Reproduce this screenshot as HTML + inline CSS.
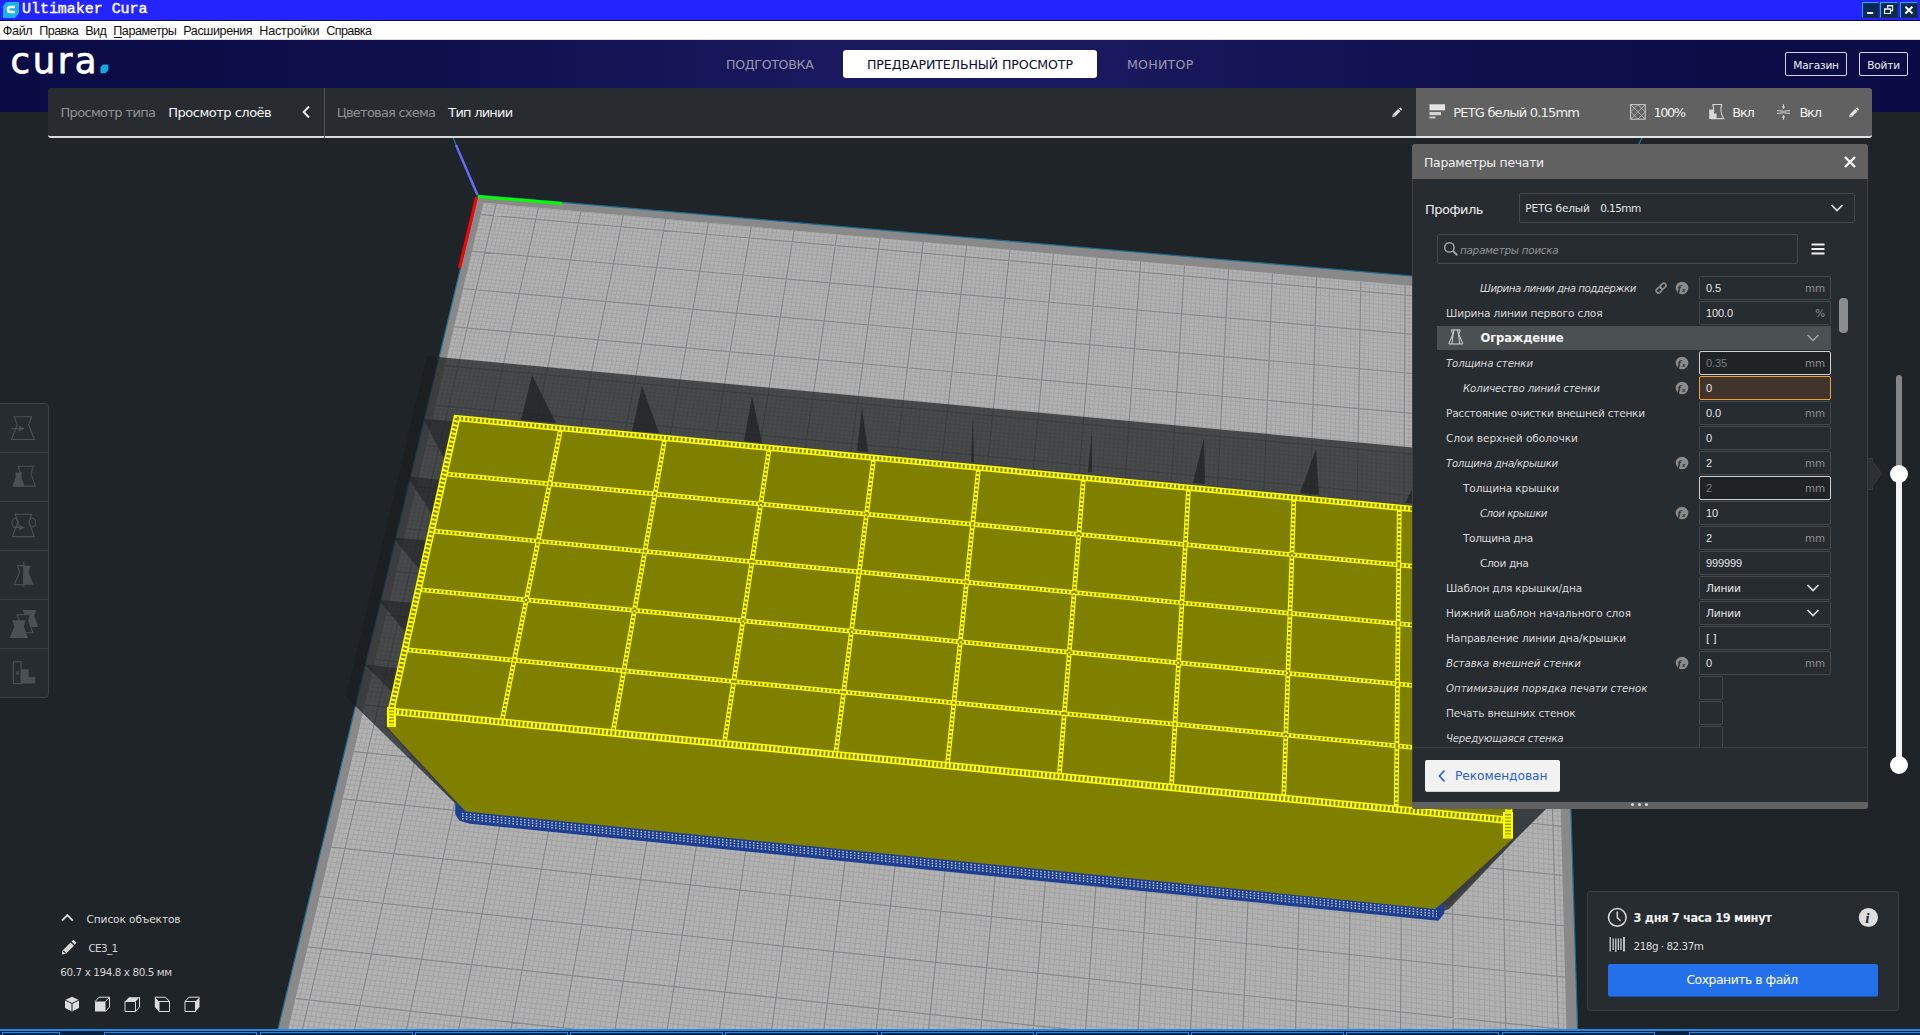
<!DOCTYPE html>
<html lang="ru">
<head>
<meta charset="utf-8">
<title>Ultimaker Cura</title>
<style>
*{box-sizing:border-box;margin:0;padding:0}
html,body{width:1920px;height:1035px;overflow:hidden;background:#1f2428}
body{position:relative;font-family:"Liberation Sans","DejaVu Sans",sans-serif;color:#e6e6e6;font-size:14px}
.abs{position:absolute;display:block}
.t{position:absolute;white-space:nowrap;line-height:1}
svg{overflow:visible}
</style>
</head>
<body>
<svg id="scene" class="abs" style="left:0;top:0" width="1920" height="1035" viewBox="0 0 1920 1035">
<polygon points="478.0,195.0 1554.9,288.4 1583.6,1223.2 266.8,1075.7" fill="#898989" stroke="#1d6c90" stroke-width="1.2"/>
<clipPath id="cpin"><polygon points="483.5,202.7 1547.2,298.0 1571.5,1221.9 277.0,1076.9"/></clipPath>
<polygon points="483.5,202.7 1547.2,298.0 1571.5,1221.9 277.0,1076.9" fill="#b2b2b2"/>
<path d="M485.3 195.6L275.7 1076.7M489.5 196.0L280.8 1077.3M493.7 196.4L285.9 1077.9M502.2 197.1L296.1 1079.0M506.4 197.5L301.2 1079.6M510.6 197.8L306.4 1080.2M514.8 198.2L311.5 1080.7M519.0 198.6L316.6 1081.3M523.2 198.9L321.7 1081.9M527.5 199.3L326.9 1082.5M531.7 199.7L332.0 1083.0M535.9 200.0L337.1 1083.6M544.4 200.8L347.4 1084.8M548.6 201.1L352.5 1085.3M552.8 201.5L357.7 1085.9M557.0 201.9L362.8 1086.5M561.3 202.2L368.0 1087.1M565.5 202.6L373.1 1087.6M569.7 203.0L378.2 1088.2M574.0 203.3L383.4 1088.8M578.2 203.7L388.5 1089.4M586.7 204.4L398.8 1090.5M590.9 204.8L404.0 1091.1M595.1 205.2L409.1 1091.7M599.4 205.5L414.3 1092.3M603.6 205.9L419.4 1092.8M607.8 206.3L424.6 1093.4M612.1 206.6L429.8 1094.0M616.3 207.0L434.9 1094.6M620.6 207.4L440.1 1095.1M629.0 208.1L450.4 1096.3M633.3 208.5L455.6 1096.9M637.5 208.8L460.7 1097.5M641.8 209.2L465.9 1098.0M646.0 209.6L471.1 1098.6M650.3 209.9L476.3 1099.2M654.5 210.3L481.4 1099.8M658.8 210.7L486.6 1100.4M663.0 211.0L491.8 1100.9M671.5 211.8L502.1 1102.1M675.8 212.2L507.3 1102.7M680.1 212.5L512.5 1103.3M684.3 212.9L517.7 1103.8M688.6 213.3L522.9 1104.4M692.8 213.6L528.1 1105.0M697.1 214.0L533.2 1105.6M701.3 214.4L538.4 1106.2M705.6 214.7L543.6 1106.7M714.1 215.5L554.0 1107.9M718.4 215.9L559.2 1108.5M722.7 216.2L564.4 1109.1M726.9 216.6L569.6 1109.6M731.2 217.0L574.8 1110.2M735.5 217.3L580.0 1110.8M739.7 217.7L585.2 1111.4M744.0 218.1L590.4 1112.0M748.3 218.4L595.6 1112.6M756.8 219.2L606.0 1113.7M761.1 219.6L611.2 1114.3M765.4 219.9L616.5 1114.9M769.7 220.3L621.7 1115.5M773.9 220.7L626.9 1116.1M778.2 221.0L632.1 1116.6M782.5 221.4L637.3 1117.2M786.8 221.8L642.5 1117.8M791.1 222.2L647.8 1118.4M799.6 222.9L658.2 1119.6M803.9 223.3L663.4 1120.2M808.2 223.6L668.7 1120.7M812.5 224.0L673.9 1121.3M816.8 224.4L679.1 1121.9M821.1 224.8L684.4 1122.5M825.4 225.1L689.6 1123.1M829.7 225.5L694.8 1123.7M833.9 225.9L700.1 1124.3M842.5 226.6L710.5 1125.4M846.8 227.0L715.8 1126.0M851.1 227.4L721.0 1126.6M855.4 227.7L726.3 1127.2M859.7 228.1L731.5 1127.8M864.0 228.5L736.8 1128.4M868.3 228.9L742.0 1129.0M872.6 229.2L747.3 1129.5M876.9 229.6L752.5 1130.1M885.5 230.3L763.0 1131.3M889.8 230.7L768.3 1131.9M894.1 231.1L773.5 1132.5M898.5 231.5L778.8 1133.1M902.8 231.8L784.1 1133.7M907.1 232.2L789.3 1134.3M911.4 232.6L794.6 1134.8M915.7 233.0L799.8 1135.4M920.0 233.3L805.1 1136.0M928.6 234.1L815.7 1137.2M933.0 234.5L820.9 1137.8M937.3 234.8L826.2 1138.4M941.6 235.2L831.5 1139.0M945.9 235.6L836.8 1139.6M950.2 236.0L842.0 1140.2M954.5 236.3L847.3 1140.7M958.9 236.7L852.6 1141.3M963.2 237.1L857.9 1141.9M971.8 237.8L868.4 1143.1M976.2 238.2L873.7 1143.7M980.5 238.6L879.0 1144.3M984.8 239.0L884.3 1144.9M989.2 239.3L889.6 1145.5M993.5 239.7L894.9 1146.1M997.8 240.1L900.2 1146.7M1002.1 240.5L905.5 1147.3M1006.5 240.8L910.8 1147.9M1015.2 241.6L921.4 1149.0M1019.5 242.0L926.7 1149.6M1023.8 242.3L932.0 1150.2M1028.2 242.7L937.3 1150.8M1032.5 243.1L942.6 1151.4M1036.8 243.5L947.9 1152.0M1041.2 243.8L953.2 1152.6M1045.5 244.2L958.5 1153.2M1049.9 244.6L963.9 1153.8M1058.6 245.4L974.5 1155.0M1062.9 245.7L979.8 1155.6M1067.3 246.1L985.1 1156.2M1071.6 246.5L990.4 1156.8M1076.0 246.9L995.8 1157.4M1080.3 247.2L1001.1 1158.0M1084.7 247.6L1006.4 1158.6M1089.0 248.0L1011.7 1159.2M1093.4 248.4L1017.1 1159.8M1102.1 249.1L1027.7 1161.0M1106.4 249.5L1033.1 1161.6M1110.8 249.9L1038.4 1162.2M1115.2 250.3L1043.7 1162.7M1119.5 250.6L1049.1 1163.3M1123.9 251.0L1054.4 1163.9M1128.2 251.4L1059.8 1164.5M1132.6 251.8L1065.1 1165.1M1137.0 252.2L1070.5 1165.7M1145.7 252.9L1081.1 1166.9M1150.1 253.3L1086.5 1167.5M1154.4 253.7L1091.8 1168.1M1158.8 254.0L1097.2 1168.7M1163.2 254.4L1102.6 1169.3M1167.6 254.8L1107.9 1169.9M1171.9 255.2L1113.3 1170.5M1176.3 255.6L1118.6 1171.1M1180.7 255.9L1124.0 1171.7M1189.4 256.7L1134.7 1172.9M1193.8 257.1L1140.1 1173.5M1198.2 257.5L1145.4 1174.1M1202.6 257.8L1150.8 1174.7M1207.0 258.2L1156.2 1175.3M1211.3 258.6L1161.6 1175.9M1215.7 259.0L1166.9 1176.5M1220.1 259.4L1172.3 1177.1M1224.5 259.7L1177.7 1177.7M1233.3 260.5L1188.4 1179.0M1237.7 260.9L1193.8 1179.6M1242.0 261.3L1199.2 1180.2M1246.4 261.6L1204.6 1180.8M1250.8 262.0L1210.0 1181.4M1255.2 262.4L1215.4 1182.0M1259.6 262.8L1220.7 1182.6M1264.0 263.2L1226.1 1183.2M1268.4 263.6L1231.5 1183.8M1277.2 264.3L1242.3 1185.0M1281.6 264.7L1247.7 1185.6M1286.0 265.1L1253.1 1186.2M1290.4 265.5L1258.5 1186.8M1294.8 265.8L1263.9 1187.4M1299.2 266.2L1269.3 1188.0M1303.6 266.6L1274.7 1188.6M1308.0 267.0L1280.1 1189.2M1312.4 267.4L1285.5 1189.8M1321.2 268.1L1296.4 1191.0M1325.7 268.5L1301.8 1191.6M1330.1 268.9L1307.2 1192.3M1334.5 269.3L1312.6 1192.9M1338.9 269.7L1318.0 1193.5M1343.3 270.0L1323.4 1194.1M1347.7 270.4L1328.9 1194.7M1352.1 270.8L1334.3 1195.3M1356.6 271.2L1339.7 1195.9M1365.4 272.0L1350.6 1197.1M1369.8 272.3L1356.0 1197.7M1374.2 272.7L1361.4 1198.3M1378.7 273.1L1366.9 1198.9M1383.1 273.5L1372.3 1199.5M1387.5 273.9L1377.7 1200.2M1391.9 274.3L1383.2 1200.8M1396.4 274.6L1388.6 1201.4M1400.8 275.0L1394.0 1202.0M1409.6 275.8L1404.9 1203.2M1414.1 276.2L1410.4 1203.8M1418.5 276.6L1415.8 1204.4M1422.9 277.0L1421.3 1205.0M1427.4 277.3L1426.7 1205.6M1431.8 277.7L1432.2 1206.3M1436.2 278.1L1437.6 1206.9M1440.7 278.5L1443.1 1207.5M1445.1 278.9L1448.5 1208.1M1454.0 279.6L1459.5 1209.3M1458.4 280.0L1464.9 1209.9M1462.9 280.4L1470.4 1210.5M1467.3 280.8L1475.8 1211.1M1471.8 281.2L1481.3 1211.8M1476.2 281.6L1486.8 1212.4M1480.7 282.0L1492.2 1213.0M1485.1 282.3L1497.7 1213.6M1489.6 282.7L1503.2 1214.2M1498.5 283.5L1514.1 1215.4M1502.9 283.9L1519.6 1216.0M1507.4 284.3L1525.1 1216.7M1511.8 284.7L1530.6 1217.3M1516.3 285.1L1536.1 1217.9M1520.8 285.4L1541.5 1218.5M1525.2 285.8L1547.0 1219.1M1529.7 286.2L1552.5 1219.7M1534.1 286.6L1558.0 1220.3M1543.1 287.4L1569.0 1221.6M1547.5 287.8L1574.5 1222.2M477.0 199.4L1555.1 293.0M476.1 203.0L1555.2 296.8M475.2 206.6L1555.3 300.6M474.4 210.2L1555.4 304.4M472.6 217.5L1555.7 312.1M471.7 221.1L1555.8 316.0M470.9 224.8L1555.9 319.8M470.0 228.5L1556.0 323.7M469.1 232.1L1556.1 327.6M468.2 235.8L1556.3 331.4M467.3 239.5L1556.4 335.3M466.4 243.2L1556.5 339.2M465.6 246.9L1556.6 343.1M463.8 254.3L1556.9 350.9M462.9 258.0L1557.0 354.9M462.0 261.7L1557.1 358.8M461.1 265.4L1557.2 362.7M460.2 269.2L1557.3 366.7M459.3 272.9L1557.5 370.6M458.4 276.7L1557.6 374.6M457.5 280.4L1557.7 378.5M456.6 284.2L1557.8 382.5M454.8 291.8L1558.1 390.5M453.9 295.5L1558.2 394.5M453.0 299.3L1558.3 398.5M452.1 303.1L1558.4 402.5M451.2 306.9L1558.6 406.5M450.2 310.8L1558.7 410.5M449.3 314.6L1558.8 414.6M448.4 318.4L1558.9 418.6M447.5 322.2L1559.1 422.7M445.6 329.9L1559.3 430.8M444.7 333.8L1559.4 434.9M443.8 337.6L1559.6 439.0M442.9 341.5L1559.7 443.1M441.9 345.4L1559.8 447.2M441.0 349.3L1559.9 451.3M440.1 353.2L1560.1 455.4M439.1 357.1L1560.2 459.5M438.2 361.0L1560.3 463.6M436.3 368.8L1560.6 471.9M435.4 372.8L1560.7 476.1M434.4 376.7L1560.8 480.2M433.5 380.6L1561.0 484.4M432.5 384.6L1561.1 488.6M431.6 388.6L1561.2 492.8M430.6 392.5L1561.3 497.0M429.7 396.5L1561.5 501.2M428.7 400.5L1561.6 505.4M426.8 408.5L1561.9 513.8M425.8 412.5L1562.0 518.1M424.9 416.5L1562.1 522.3M423.9 420.5L1562.3 526.6M423.0 424.5L1562.4 530.8M422.0 428.6L1562.5 535.1M421.0 432.6L1562.6 539.4M420.0 436.7L1562.8 543.7M419.1 440.7L1562.9 548.0M417.1 448.9L1563.2 556.6M416.1 453.0L1563.3 560.9M415.2 457.1L1563.4 565.2M414.2 461.2L1563.6 569.6M413.2 465.3L1563.7 573.9M412.2 469.4L1563.8 578.3M411.2 473.5L1564.0 582.6M410.2 477.6L1564.1 587.0M409.2 481.8L1564.2 591.4M407.2 490.1L1564.5 600.2M406.2 494.2L1564.6 604.6M405.2 498.4L1564.8 609.0M404.2 502.6L1564.9 613.5M403.2 506.8L1565.1 617.9M402.2 511.0L1565.2 622.3M401.2 515.2L1565.3 626.8M400.2 519.4L1565.5 631.3M399.2 523.6L1565.6 635.7M397.2 532.1L1565.9 644.7M396.1 536.3L1566.0 649.2M395.1 540.6L1566.2 653.7M394.1 544.8L1566.3 658.2M393.1 549.1L1566.4 662.8M392.0 553.4L1566.6 667.3M391.0 557.7L1566.7 671.8M390.0 562.0L1566.8 676.4M389.0 566.3L1567.0 681.0M386.9 574.9L1567.3 690.1M385.8 579.3L1567.4 694.7M384.8 583.6L1567.6 699.3M383.8 587.9L1567.7 703.9M382.7 592.3L1567.8 708.5M381.7 596.7L1568.0 713.2M380.6 601.0L1568.1 717.8M379.6 605.4L1568.3 722.5M378.5 609.8L1568.4 727.1M376.4 618.6L1568.7 736.5M375.3 623.0L1568.8 741.2M374.3 627.5L1569.0 745.9M373.2 631.9L1569.1 750.6M372.2 636.4L1569.3 755.3M371.1 640.8L1569.4 760.0M370.0 645.3L1569.6 764.8M368.9 649.7L1569.7 769.5M367.9 654.2L1569.9 774.3M365.7 663.2L1570.1 783.8M364.6 667.7L1570.3 788.6M363.5 672.2L1570.4 793.4M362.5 676.8L1570.6 798.2M361.4 681.3L1570.7 803.0M360.3 685.9L1570.9 807.9M359.2 690.4L1571.0 812.7M358.1 695.0L1571.2 817.5M357.0 699.5L1571.3 822.4M354.8 708.7L1571.6 832.1M353.7 713.3L1571.8 837.0M352.6 717.9L1571.9 841.9M351.5 722.6L1572.1 846.8M350.4 727.2L1572.2 851.8M349.3 731.8L1572.4 856.7M348.1 736.5L1572.5 861.6M347.0 741.1L1572.7 866.6M345.9 745.8L1572.8 871.6M343.7 755.2L1573.1 881.5M342.5 759.9L1573.3 886.5M341.4 764.6L1573.4 891.5M340.3 769.3L1573.6 896.5M339.1 774.0L1573.8 901.6M338.0 778.8L1573.9 906.6M336.9 783.5L1574.1 911.7M335.7 788.3L1574.2 916.7M334.6 793.0L1574.4 921.8M332.3 802.6L1574.7 932.0M331.1 807.4L1574.8 937.1M330.0 812.2L1575.0 942.2M328.8 817.0L1575.2 947.3M327.7 821.8L1575.3 952.4M326.5 826.7L1575.5 957.6M325.3 831.5L1575.6 962.8M324.2 836.4L1575.8 967.9M323.0 841.2L1576.0 973.1M320.7 851.0L1576.3 983.5M319.5 855.9L1576.4 988.7M318.3 860.8L1576.6 994.0M317.1 865.7L1576.8 999.2M316.0 870.7L1576.9 1004.4M314.8 875.6L1577.1 1009.7M313.6 880.6L1577.2 1015.0M312.4 885.5L1577.4 1020.3M311.2 890.5L1577.6 1025.6M308.8 900.5L1577.9 1036.2M307.6 905.5L1578.1 1041.5M306.4 910.5L1578.2 1046.9M305.2 915.5L1578.4 1052.2M304.0 920.6L1578.5 1057.6M302.8 925.6L1578.7 1063.0M301.6 930.7L1578.9 1068.4M300.4 935.7L1579.0 1073.8M299.1 940.8L1579.2 1079.2M296.7 951.0L1579.5 1090.1M295.5 956.1L1579.7 1095.5M294.2 961.2L1579.9 1101.0M293.0 966.4L1580.0 1106.5M291.8 971.5L1580.2 1111.9M290.5 976.7L1580.4 1117.4M289.3 981.8L1580.6 1123.0M288.0 987.0L1580.7 1128.5M286.8 992.2L1580.9 1134.0M284.3 1002.6L1581.2 1145.1M283.1 1007.9L1581.4 1150.7M281.8 1013.1L1581.6 1156.3M280.5 1018.3L1581.7 1161.9M279.3 1023.6L1581.9 1167.5M278.0 1028.9L1582.1 1173.2M276.7 1034.2L1582.3 1178.8M275.5 1039.5L1582.4 1184.5M274.2 1044.8L1582.6 1190.1M271.7 1055.4L1583.0 1201.5M270.4 1060.7L1583.1 1207.2M269.1 1066.1L1583.3 1212.9M267.8 1071.5L1583.5 1218.7" stroke="#a0a0a0" stroke-width="0.9" fill="none" clip-path="url(#cpin)"/>
<path d="M497.9 196.7L291.0 1078.4M540.1 200.4L342.3 1084.2M582.4 204.1L393.7 1089.9M624.8 207.7L445.2 1095.7M667.3 211.4L497.0 1101.5M709.9 215.1L548.8 1107.3M752.6 218.8L600.8 1113.1M795.3 222.5L653.0 1119.0M838.2 226.2L705.3 1124.8M881.2 230.0L757.8 1130.7M924.3 233.7L810.4 1136.6M967.5 237.5L863.2 1142.5M1010.8 241.2L916.1 1148.5M1054.2 245.0L969.2 1154.4M1097.7 248.7L1022.4 1160.4M1141.3 252.5L1075.8 1166.3M1185.1 256.3L1129.3 1172.3M1228.9 260.1L1183.1 1178.4M1272.8 263.9L1236.9 1184.4M1316.8 267.8L1291.0 1190.4M1361.0 271.6L1345.1 1196.5M1405.2 275.4L1399.5 1202.6M1449.6 279.3L1454.0 1208.7M1494.0 283.1L1508.7 1214.8M1538.6 287.0L1563.5 1221.0M473.5 213.9L1555.6 308.3M464.7 250.6L1556.7 347.0M455.7 288.0L1558.0 386.5M446.6 326.1L1559.2 426.7M437.3 364.9L1560.4 467.8M427.8 404.5L1561.7 509.6M418.1 444.8L1563.0 552.3M408.2 485.9L1564.4 595.8M398.2 527.8L1565.7 640.2M387.9 570.6L1567.1 685.5M377.5 614.2L1568.5 731.8M366.8 658.7L1570.0 779.0M355.9 704.1L1571.5 827.3M344.8 750.5L1573.0 876.5M333.4 797.8L1574.5 926.9M321.8 846.1L1576.1 978.3M310.0 895.5L1577.7 1030.9M297.9 945.9L1579.4 1084.6M285.6 997.4L1581.1 1139.6M272.9 1050.1L1582.8 1195.8" stroke="#85888c" stroke-width="1.2" fill="none" clip-path="url(#cpin)"/>
<polygon points="427.0,356.0 1570.0,462.0 1553.0,800.0 1449.0,909.0 1441.0,912.0 458.0,806.0 346.0,697.0" fill="#1b1d1f" fill-opacity="0.71"/>
<polygon points="532.0,375.0 521.0,420.0 556.0,423.0" fill="#202224" fill-opacity="0.75"/>
<polygon points="642.0,386.0 632.0,431.0 659.0,433.0" fill="#202224" fill-opacity="0.75"/>
<polygon points="752.0,396.0 744.0,441.0 762.0,443.0" fill="#202224" fill-opacity="0.75"/>
<polygon points="862.0,407.0 857.0,451.0 868.0,452.0" fill="#202224" fill-opacity="0.75"/>
<polygon points="973.0,417.0 971.0,462.0 974.0,462.5" fill="#202224" fill-opacity="0.75"/>
<polygon points="1092.0,430.0 1088.0,472.0 1092.0,472.6" fill="#202224" fill-opacity="0.75"/>
<polygon points="1204.0,438.0 1193.0,483.0 1205.0,484.0" fill="#202224" fill-opacity="0.75"/>
<polygon points="1316.0,449.0 1300.0,493.0 1319.0,495.0" fill="#202224" fill-opacity="0.75"/>
<polygon points="1428.0,460.0 1405.0,503.0 1431.0,505.0" fill="#202224" fill-opacity="0.75"/>
<polygon points="423.4,418.7 453.8,421.2 444.9,460.5" fill="#202224" fill-opacity="0.6"/>
<polygon points="407.3,476.6 444.9,480.2 434.1,517.7" fill="#202224" fill-opacity="0.6"/>
<polygon points="393.0,537.4 432.3,540.9 425.2,576.7" fill="#202224" fill-opacity="0.6"/>
<polygon points="378.7,599.9 421.6,603.5 412.7,641.0" fill="#202224" fill-opacity="0.6"/>
<polygon points="364.4,664.3 407.3,669.6 400.2,700.0" fill="#202224" fill-opacity="0.6"/>
<polygon points="1514.0,806.0 1549.0,806.0 1447.5,906.5 1443.5,902.5 1512.0,839.0" fill="#3b3e41"/>
<path d="M386 726L458 804" stroke="#3b3e41" stroke-width="3" fill="none"/>
<polygon points="456.0,803.0 466.0,811.5 1435.0,908.8 1443.5,901.0 1443.5,913.0 1438.0,920.0 470.0,823.0 460.0,820.0 456.0,814.0" fill="#1f3f92" stroke="#1f3f92" stroke-width="1.5" stroke-linejoin="round"/>
<path d="M462.0 813.5L1437.0 911.2M462.0 816.1L1437.0 913.8M462.0 818.7L1437.0 916.4" stroke="#b9c0cc" stroke-width="1.5" stroke-dasharray="1.5 2.4" fill="none"/>
<polygon points="387.0,712.0 1512.5,822.0 1512.5,839.0 1443.5,902.0 1435.0,909.0 466.0,811.5 458.0,803.5 387.0,727.0" fill="#808000"/>
<polygon points="456.8,418.2 1505.0,517.7 1509.0,820.3 391.0,711.3" fill="#808000"/>
<path d="M560.8 428.1L501.8 722.1M664.9 438.0L612.9 732.9M769.3 447.9L724.2 743.8M873.8 457.8L835.6 754.7M978.6 467.7L947.3 765.5M1083.5 477.7L1059.2 776.4M1188.6 487.7L1171.4 787.4M1293.9 497.7L1283.7 798.3M1399.3 507.7L1396.2 809.3M444.3 473.9L1505.8 575.1M431.5 530.9L1506.5 634.0M418.3 589.5L1507.3 694.5M404.9 649.6L1508.2 756.6" stroke="#ffff00" stroke-width="4.7" fill="none"/>
<path d="M560.8 428.1L501.8 722.1M664.9 438.0L612.9 732.9M769.3 447.9L724.2 743.8M873.8 457.8L835.6 754.7M978.6 467.7L947.3 765.5M1083.5 477.7L1059.2 776.4M1188.6 487.7L1171.4 787.4M1293.9 497.7L1283.7 798.3M1399.3 507.7L1396.2 809.3M444.3 473.9L1505.8 575.1M431.5 530.9L1506.5 634.0M418.3 589.5L1507.3 694.5M404.9 649.6L1508.2 756.6" stroke="#848400" stroke-width="2.6" stroke-dasharray="2.2 2" fill="none"/>
<path d="M454.0 414.8L1508.5 514.9L1512.6 824.4L386.7 714.6Z M459.6 421.6L1501.5 520.5L1505.4 816.2L395.3 708.0Z" fill="#ffff00" fill-rule="evenodd"/>
<path d="M456.8 418.2L1505.0 517.7" stroke="#848400" stroke-width="3.4" stroke-dasharray="2.2 2" fill="none"/>
<path d="M1505.0 517.7L1509.0 820.3" stroke="#848400" stroke-width="4.2" stroke-dasharray="2.2 2" fill="none"/>
<path d="M1509.0 820.3L391.0 711.3" stroke="#848400" stroke-width="4.6" stroke-dasharray="2.2 2" fill="none"/>
<path d="M391.0 711.3L456.8 418.2" stroke="#848400" stroke-width="4.2" stroke-dasharray="2.2 2" fill="none"/>
<rect x="387" y="707" width="9" height="20" fill="#ffff00"/>
<path d="M391.5 709V725.5" stroke="#9a9a00" stroke-width="5" stroke-dasharray="1.4 1.8" fill="none"/>
<rect x="1503" y="812" width="10" height="26.5" fill="#ffff00"/>
<path d="M1508.0 814V837.0" stroke="#9a9a00" stroke-width="6" stroke-dasharray="1.4 1.8" fill="none"/>
<path d="M1645.5 131L1638.3 145M452 135L456.5 146" stroke="#1d7ca8" stroke-width="1.2" fill="none"/>
<path d="M456 145L477.5 195" stroke="#6a6aff" stroke-width="2.4" fill="none"/>
<path d="M478 196.5L562 203.5" stroke="#00ff00" stroke-width="3" fill="none"/>
<path d="M476.5 197L459.5 268" stroke="#ff0000" stroke-width="3" fill="none"/>
</svg>
<div class="abs" style="left:0px;top:0px;width:1920px;height:20px;background:#2424ff"></div>
<div class="abs" style="left:0px;top:20px;width:1920px;height:1px;background:#101040"></div>
<svg class="abs" style="left:2px;top:1px" width="18" height="18" viewBox="0 0 18 18"><path d="M4 1H17V12L13 17H1V5Z" fill="#18b4e6"/><path d="M13 6H8.2Q6 6 6 8.2V8.8Q6 11 8.2 11H13" fill="none" stroke="#fff" stroke-width="2.6"/></svg>
<span class="t" style="top:2.15px;font-size:15px;color:#ffffff;letter-spacing:-0.038px;left:22.00px;font-family:'Liberation Mono','DejaVu Sans Mono',monospace;-webkit-text-stroke:0.4px #fff;">Ultimaker Cura</span>
<div class="abs" style="left:1862px;top:2px;width:17.2px;height:15.8px;background:#062a52;border-top:1px solid #1ea8ff;border-left:1px solid #1ea8ff;border-right:1px solid #2a2c3a;border-bottom:1px solid #2a2c3a"></div>
<div class="abs" style="left:1879.8px;top:2px;width:18px;height:15.8px;background:#062a52;border-top:1px solid #1ea8ff;border-left:1px solid #1ea8ff;border-right:1px solid #2a2c3a;border-bottom:1px solid #2a2c3a"></div>
<div class="abs" style="left:1900px;top:2px;width:17.8px;height:15.8px;background:#062a52;border-top:1px solid #1ea8ff;border-left:1px solid #1ea8ff;border-right:1px solid #2a2c3a;border-bottom:1px solid #2a2c3a"></div>
<svg class="abs" style="left:1860px;top:0px" width="60" height="20" viewBox="1860 0 60 20"><rect x="1866.9" y="12.1" width="6.3" height="1.9" fill="#fff"/><path d="M1884.6 9.3H1890.5V13.5H1884.6ZM1884.1 8.8H1891" stroke="#fff" stroke-width="1.1" fill="none"/><path d="M1887.7 8V5.8H1892.6V10.6H1891" stroke="#fff" stroke-width="1.1" fill="none"/><path d="M1887.2 5.7H1893.1" stroke="#fff" stroke-width="1.2"/><path d="M1905.4 6.8L1912.4 13.5M1912.4 6.8L1905.4 13.5" stroke="#fff" stroke-width="2" fill="none"/></svg>
<div class="abs" style="left:0px;top:21px;width:1920px;height:19px;background:#ffffff;border-bottom:1px solid #dcdcdc"></div>
<span class="t" style="top:25.03px;font-size:12.6px;color:#111111;letter-spacing:-0.369px;left:2.80px;">Файл</span>
<span class="t" style="top:25.03px;font-size:12.6px;color:#111111;letter-spacing:-0.593px;left:39.30px;">Правка</span>
<span class="t" style="top:25.03px;font-size:12.6px;color:#111111;letter-spacing:-0.598px;left:85.20px;">Вид</span>
<span class="t" style="top:25.03px;font-size:12.6px;color:#111111;letter-spacing:-0.429px;left:113.20px;">Параметры</span>
<span class="t" style="top:25.03px;font-size:12.6px;color:#111111;letter-spacing:-0.427px;left:183.30px;">Расширения</span>
<span class="t" style="top:25.03px;font-size:12.6px;color:#111111;letter-spacing:-0.198px;left:259.30px;">Настройки</span>
<span class="t" style="top:25.03px;font-size:12.6px;color:#111111;letter-spacing:-0.632px;left:326.30px;">Справка</span>
<div class="abs" style="left:113.5px;top:37px;width:8px;height:1px;background:#111"></div>
<div class="abs" style="left:0px;top:40px;width:1920px;height:72px;background:linear-gradient(90deg,#0a0a44 0%,#0f0f4c 22%,#1a185e 42%,#1a185e 58%,#0f0f4c 78%,#0a0a44 100%)"></div>
<span class="t" style="top:42.77px;font-size:35.5px;color:#ffffff;letter-spacing:2.533px;left:10.60px;font-family:'DejaVu Sans','Liberation Sans',sans-serif;-webkit-text-stroke:0.75px #fff;">cura</span>
<svg class="abs" style="left:100px;top:64px" width="9" height="10" viewBox="0 0 9 10"><path d="M2.6 0.6H8.4V5.8L5.6 9.3H0.5V3.4Z" fill="#18a8e0"/></svg>
<span class="t" style="top:59.14px;font-size:12.6px;color:#9a9aaa;letter-spacing:-0.316px;left:726.00px;font-family:'DejaVu Sans','Liberation Sans',sans-serif;">ПОДГОТОВКА</span>
<div class="abs" style="left:843px;top:50px;width:254px;height:28px;background:#ffffff;border-radius:3px"></div>
<span class="t" style="top:59.14px;font-size:12.6px;color:#0c0c34;letter-spacing:-0.118px;left:867.00px;font-family:'DejaVu Sans','Liberation Sans',sans-serif;">ПРЕДВАРИТЕЛЬНЫЙ ПРОСМОТР</span>
<span class="t" style="top:59.14px;font-size:12.6px;color:#9a9aaa;letter-spacing:0.228px;left:1127.00px;font-family:'DejaVu Sans','Liberation Sans',sans-serif;">МОНИТОР</span>
<div class="abs" style="left:1785px;top:52px;width:62px;height:24px;border:1px solid #d4d4e4;border-radius:2px"></div>
<span class="t" style="top:59.73px;font-size:10.6px;color:#f0f0f0;letter-spacing:-0.237px;left:1793.30px;font-family:'DejaVu Sans','Liberation Sans',sans-serif;">Магазин</span>
<div class="abs" style="left:1859px;top:52px;width:49px;height:24px;border:1px solid #d4d4e4;border-radius:2px"></div>
<span class="t" style="top:59.73px;font-size:10.6px;color:#f0f0f0;letter-spacing:-0.242px;left:1867.30px;font-family:'DejaVu Sans','Liberation Sans',sans-serif;">Войти</span>
<div class="abs" style="left:48px;top:88px;width:1368px;height:50px;background:#282c30;border-radius:3px 0 0 3px;border-bottom:2px solid #d9d9d9"></div>
<div class="abs" style="left:324px;top:88px;width:1px;height:50px;background:#50555a"></div>
<span class="t" style="top:106.40px;font-size:13px;color:#8e9194;letter-spacing:-0.641px;left:60.40px;font-family:'DejaVu Sans','Liberation Sans',sans-serif;">Просмотр типа</span>
<span class="t" style="top:106.40px;font-size:13px;color:#f2f2f2;letter-spacing:-0.495px;left:168.30px;font-family:'DejaVu Sans','Liberation Sans',sans-serif;">Просмотр слоёв</span>
<svg class="abs" style="left:301px;top:105px" width="10" height="14" viewBox="0 0 10 14"><path d="M8 1.5L2.7 7L8 12.5" stroke="#e8e8e8" stroke-width="2" fill="none"/></svg>
<span class="t" style="top:106.40px;font-size:13px;color:#8e9194;letter-spacing:-0.784px;left:336.70px;font-family:'DejaVu Sans','Liberation Sans',sans-serif;">Цветовая схема</span>
<span class="t" style="top:106.40px;font-size:13px;color:#f2f2f2;letter-spacing:-0.797px;left:448.30px;font-family:'DejaVu Sans','Liberation Sans',sans-serif;">Тип линии</span>
<svg class="abs" style="left:1391px;top:106.5px" width="11.5" height="11.5" viewBox="-0.5 -0.5 14 14"><path d="M1 12L1.6 8.6L8.2 2L11 4.8L4.4 11.4Z M9 1.2L10 0.3Q10.6 -0.2 11.3 0.4L12.6 1.7Q13.2 2.4 12.6 3L11.7 3.9Z" fill="#e0e0e0"/><path d="M2.2 8.9L4.1 10.8" stroke="#282c30" stroke-width="0.9"/></svg>
<div class="abs" style="left:1416px;top:88px;width:456px;height:50px;background:#616161;border-radius:0 3px 3px 0;border-bottom:2px solid #e2e2e2"></div>
<svg class="abs" style="left:1429px;top:104px" width="17" height="16" viewBox="0 0 17 16"><rect x="0.5" y="0.3" width="15.5" height="6" fill="#e4e4e4"/><rect x="0.5" y="8" width="11.5" height="3.2" fill="#d4d4d4"/><rect x="0.5" y="12.6" width="6" height="1.8" fill="#cfcfcf"/></svg>
<span class="t" style="top:106.40px;font-size:13px;color:#f0f0f0;letter-spacing:-0.802px;left:1453.20px;font-family:'DejaVu Sans','Liberation Sans',sans-serif;">PETG белый 0.15mm</span>
<svg class="abs" style="left:1629.7px;top:103.6px" width="16" height="16" viewBox="0 0 16 16"><rect x="0.6" y="0.6" width="14.6" height="14.6" fill="none" stroke="#cdcdcd" stroke-width="1"/><path d="M0.6 0.6L15.2 15.2M15.2 0.6L0.6 15.2M7.9 0.6L15.2 7.9L7.9 15.2L0.6 7.9Z" stroke="#c4c4c4" stroke-width="0.8" fill="none"/></svg>
<span class="t" style="top:106.40px;font-size:13px;color:#f0f0f0;letter-spacing:-1.541px;left:1653.60px;font-family:'DejaVu Sans','Liberation Sans',sans-serif;">100%</span>
<svg class="abs" style="left:1707.5px;top:103px" width="18" height="18" viewBox="0 0 18 18"><path d="M4.8 1.5H13.6Q11.6 8.5 15.6 15.6H4Q7 8.5 4.8 1.5Z" fill="none" stroke="#d4d4d4" stroke-width="1.1"/><path d="M1.2 6.6H5.2V10.6H8.6V16.1H1.2Z" fill="#d8d8d8"/></svg>
<span class="t" style="top:106.40px;font-size:13px;color:#f0f0f0;letter-spacing:-1.194px;left:1732.20px;font-family:'DejaVu Sans','Liberation Sans',sans-serif;">Вкл</span>
<svg class="abs" style="left:1775px;top:103px" width="17" height="18" viewBox="0 0 17 18"><path d="M2 7.6Q8.5 8.8 15 7.6M2 10.4Q8.5 9.2 15 10.4" stroke="#d4d4d4" stroke-width="1" fill="none"/><path d="M8.5 1.2V5M8.5 16.8V13" stroke="#d4d4d4" stroke-width="1.1"/><path d="M6.7 3.6L8.5 6L10.3 3.6ZM6.7 14.4L8.5 12L10.3 14.4Z" fill="#d4d4d4"/></svg>
<span class="t" style="top:106.40px;font-size:13px;color:#f0f0f0;letter-spacing:-1.194px;left:1799.40px;font-family:'DejaVu Sans','Liberation Sans',sans-serif;">Вкл</span>
<svg class="abs" style="left:1848.3px;top:106.5px" width="11.5" height="11.5" viewBox="-0.5 -0.5 14 14"><path d="M1 12L1.6 8.6L8.2 2L11 4.8L4.4 11.4Z M9 1.2L10 0.3Q10.6 -0.2 11.3 0.4L12.6 1.7Q13.2 2.4 12.6 3L11.7 3.9Z" fill="#e4e4e4"/><path d="M2.2 8.9L4.1 10.8" stroke="#616161" stroke-width="0.9"/></svg>
<div class="abs" style="left:-1px;top:403px;width:50px;height:295px;background:#272c30;border:1px solid #3c4146;border-radius:0 4px 4px 0"></div>
<div class="abs" style="left:0px;top:452px;width:48px;height:1px;background:#3c4146"></div>
<div class="abs" style="left:0px;top:501px;width:48px;height:1px;background:#3c4146"></div>
<div class="abs" style="left:0px;top:550px;width:48px;height:1px;background:#3c4146"></div>
<div class="abs" style="left:0px;top:599px;width:48px;height:1px;background:#3c4146"></div>
<div class="abs" style="left:0px;top:648px;width:48px;height:1px;background:#3c4146"></div>
<svg class="abs" style="left:1.8px;top:412.3px" width="45.6" height="32.3" viewBox="0 0 48 34"><path d="M13 5H31L28 13.5L34 29H10L16 13.5Z" fill="none" stroke="#4b5054" stroke-width="1.2"/><path d="M10 17.5H19" stroke="#4b5054" stroke-width="1.2"/><path d="M18 14.5L24 17.5L18 20.5Z" fill="#4b5054"/></svg>
<svg class="abs" style="left:1.8px;top:461.3px" width="45.6" height="32.3" viewBox="0 0 48 34"><path d="M17 5.5H33L30.5 13L35 26.5H15L19.5 13Z" fill="none" stroke="#4b5054" stroke-width="1.2"/><path d="M14 12H21L20.5 17L24 27H11L14.5 17Z" fill="#4b5054"/></svg>
<svg class="abs" style="left:1.8px;top:510.3px" width="45.6" height="32.3" viewBox="0 0 48 34"><path d="M14 4.5H31L28.5 13L34 28H11L16.5 13Z" fill="none" stroke="#4b5054" stroke-width="1.2"/><ellipse cx="14" cy="13.5" rx="3.5" ry="4.5" fill="none" stroke="#4b5054" stroke-width="1.1"/><ellipse cx="32" cy="13.5" rx="3.5" ry="4.5" fill="none" stroke="#4b5054" stroke-width="1.1"/><path d="M12 18.5H19" stroke="#4b5054" stroke-width="1.2"/><path d="M18 15.5L24 18.5L18 21.5Z" fill="#4b5054"/></svg>
<svg class="abs" style="left:1.8px;top:559.3px" width="45.6" height="32.3" viewBox="0 0 48 34"><path d="M16.5 7H23V27H13L18.5 14Z" fill="none" stroke="#4b5054" stroke-width="1.2"/><path d="M23 7H30L27.8 14L33.5 27H23Z" fill="#4b5054"/><path d="M23 3V29" stroke="#4b5054" stroke-width="1.2"/></svg>
<svg class="abs" style="left:1.8px;top:608.3px" width="45.6" height="32.3" viewBox="0 0 48 34"><path d="M22 2H36L34 8.5L38 20H20L24 8.5Z" fill="#4b5054"/><path d="M16 7H30L28 13.5L32.5 26H14L18 13.5Z" fill="#272c30" stroke="#4b5054" stroke-width="1.2"/><path d="M11 13H25L23 19.5L27.5 31.5H8L13 19.5Z" fill="#4b5054"/></svg>
<svg class="abs" style="left:1.8px;top:657.3px" width="45.6" height="32.3" viewBox="0 0 48 34"><rect x="12" y="5" width="8" height="23" fill="none" stroke="#4b5054" stroke-width="1.2"/><path d="M20 13H28V21H35V28H20Z" fill="#4b5054"/><path d="M14.5 15L18 18.5M18 15L14.5 18.5" stroke="#4b5054" stroke-width="1.1"/></svg>
<svg class="abs" style="left:59px;top:910px" width="16" height="12" viewBox="0 0 16 12"><path d="M3 10.6L8.4 5.2L13.8 10.6" stroke="#dcdcdc" stroke-width="1.9" fill="none"/></svg>
<span class="t" style="top:914.33px;font-size:10.6px;color:#dcdcdc;letter-spacing:-0.110px;left:86.50px;font-family:'DejaVu Sans','Liberation Sans',sans-serif;">Список объектов</span>
<svg class="abs" style="left:60px;top:939px" width="17" height="17" viewBox="-0.5 -0.8 14 14"><path d="M1 12L1.6 8.6L8.2 2L11 4.8L4.4 11.4Z M9 1.2L10 0.3Q10.6 -0.2 11.3 0.4L12.6 1.7Q13.2 2.4 12.6 3L11.7 3.9Z" fill="#d8d8d8"/><path d="M2.2 8.9L4.1 10.8" stroke="#20252a" stroke-width="0.9"/></svg>
<span class="t" style="top:943.40px;font-size:10.4px;color:#d4d4d4;letter-spacing:-0.654px;left:88.50px;font-family:'DejaVu Sans','Liberation Sans',sans-serif;">CE3_1</span>
<span class="t" style="top:967.20px;font-size:10.4px;color:#d4d4d4;letter-spacing:-0.414px;left:60.30px;font-family:'DejaVu Sans','Liberation Sans',sans-serif;">60.7 x 194.8 x 80.5 мм</span>
<svg class="abs" style="left:64px;top:996px" width="17" height="17" viewBox="0 0 17 17"><path d="M8 0.8L15 4V12L8 15.5L1 12V4Z" fill="#dcdcdc"/><path d="M1 4L8 7.5L15 4M8 7.5V15.5" stroke="#20252a" stroke-width="1" fill="none"/></svg>
<svg class="abs" style="left:94px;top:996px" width="17" height="17" viewBox="0 0 17 17"><path d="M1 5.5H11.5V15.5H1Z" fill="#dcdcdc"/><path d="M1 5.5L5 1.2H15.5V11L11.5 15.5M11.5 5.5L15.5 1.2" stroke="#dcdcdc" stroke-width="1" fill="none"/></svg>
<svg class="abs" style="left:124px;top:996px" width="17" height="17" viewBox="0 0 17 17"><path d="M1 5.5L5 1.2H15.5L11.5 5.5Z" fill="#dcdcdc"/><path d="M1 5.5H11.5V15.5H1ZM11.5 15.5L15.5 11V1.2" stroke="#dcdcdc" stroke-width="1" fill="none"/></svg>
<svg class="abs" style="left:154px;top:996px" width="17" height="17" viewBox="0 0 17 17"><path d="M0.8 1.2L5 5.5V15.5L0.8 11Z" fill="#dcdcdc"/><path d="M0.8 1.2H11.5L15.5 5.5V15.5H5V5.5H15.5" stroke="#dcdcdc" stroke-width="1" fill="none"/></svg>
<svg class="abs" style="left:184px;top:996px" width="17" height="17" viewBox="0 0 17 17"><path d="M11.5 5.5L15.5 1.2V11L11.5 15.5Z" fill="#dcdcdc"/><path d="M1 5.5H11.5V15.5H1ZM1 5.5L5 1.2H15.5" stroke="#dcdcdc" stroke-width="1" fill="none"/></svg>
<div class="abs" style="left:1896px;top:375px;width:6px;height:100px;background:#858585;border-radius:3px 3px 0 0"></div>
<div class="abs" style="left:1896px;top:473px;width:6px;height:292px;background:#f4f4f4"></div>
<div class="abs" style="left:1890px;top:464.5px;width:18px;height:18px;background:#ffffff;border-radius:50%"></div>
<div class="abs" style="left:1890px;top:756px;width:18px;height:18px;background:#ffffff;border-radius:50%"></div>
<svg class="abs" style="left:1866px;top:456px" width="18" height="36" viewBox="1866 456 18 36"><path d="M1866 458.5H1872.5V461.5L1881.5 473.5L1872.5 486V489.5H1866Z" fill="#2c3034" stroke="#373b3f" stroke-width="1"/></svg>
<div class="abs" style="left:1412px;top:144px;width:456px;height:665px;background:#272c30;border-radius:3px;border:1px solid #3a3f44"></div>
<div class="abs" style="left:1412px;top:144px;width:456px;height:35px;background:#616161;border-radius:3px 3px 0 0"></div>
<span class="t" style="top:156.91px;font-size:12.4px;color:#f0f0f0;letter-spacing:-0.259px;left:1424.00px;font-family:'DejaVu Sans','Liberation Sans',sans-serif;">Параметры печати</span>
<svg class="abs" style="left:1843px;top:155px" width="14" height="14" viewBox="0 0 14 14"><path d="M2 2L12 12M12 2L2 12" stroke="#f4f4f4" stroke-width="2.4" fill="none"/></svg>
<span class="t" style="top:202.60px;font-size:13px;color:#ececec;letter-spacing:-0.503px;left:1425.00px;font-family:'DejaVu Sans','Liberation Sans',sans-serif;">Профиль</span>
<div class="abs" style="left:1519px;top:193px;width:336px;height:30px;background:#272c30;border:1px solid #44494e;border-radius:2px"></div>
<span class="t" style="top:203.03px;font-size:10.6px;color:#e4e4e4;letter-spacing:-0.174px;left:1525.30px;font-family:'DejaVu Sans','Liberation Sans',sans-serif;">PETG белый</span>
<span class="t" style="top:203.03px;font-size:10.6px;color:#e4e4e4;letter-spacing:-0.625px;left:1600.20px;font-family:'DejaVu Sans','Liberation Sans',sans-serif;">0.15mm</span>
<svg class="abs" style="left:1830px;top:203px" width="14" height="10" viewBox="0 0 14 10"><path d="M1.5 2L7 7.5L12.5 2" stroke="#dcdcdc" stroke-width="1.7" fill="none"/></svg>
<div class="abs" style="left:1437px;top:234px;width:361px;height:30px;background:#272c30;border:1px solid #44494e;border-radius:2px"></div>
<svg class="abs" style="left:1443px;top:241px" width="16" height="16" viewBox="0 0 16 16"><circle cx="6.4" cy="6.4" r="4.7" stroke="#a2a5a8" stroke-width="1.5" fill="none"/><path d="M9.8 9.8L14.3 14.3" stroke="#a2a5a8" stroke-width="2"/></svg>
<span class="t" style="top:244.80px;font-size:10.4px;color:#8f9396;letter-spacing:-0.273px;left:1460.00px;font-style:italic;font-family:'DejaVu Sans','Liberation Sans',sans-serif;">параметры поиска</span>
<svg class="abs" style="left:1811px;top:243px" width="14" height="12" viewBox="0 0 14 12"><path d="M0.5 1.5H13.5M0.5 6H13.5M0.5 10.5H13.5" stroke="#f0f0f0" stroke-width="2"/></svg>
<div class="abs" style="left:1839px;top:298px;width:9px;height:35px;background:#8a8d90;border-radius:4px"></div>
<div class="abs" style="left:1413px;top:270px;width:454px;height:477px;overflow:hidden"><div class="abs" style="left:-1413px;top:-270px;width:1920px;height:1035px">
<span class="t" style="top:284.07px;font-size:10.2px;color:#d9d9d9;letter-spacing:-0.464px;left:1480.00px;font-style:italic;font-family:'DejaVu Sans','Liberation Sans',sans-serif;">Ширина линии дна поддержки</span>
<svg class="abs" style="left:1675px;top:281px" width="14" height="14" viewBox="0 0 14 14"><circle cx="7" cy="7" r="6.3" fill="#8b8b8b"/><text x="2.6" y="10.6" font-family="Liberation Serif,serif" font-style="italic" font-size="11" font-weight="bold" fill="#272c30">f</text><text x="7" y="11.4" font-family="Liberation Sans,sans-serif" font-style="italic" font-weight="bold" font-size="6" fill="#272c30">x</text></svg>
<svg class="abs" style="left:1654px;top:281px" width="14" height="14" viewBox="0 0 14 14"><g fill="none" stroke="#8b8b8b" stroke-width="1.7"><rect x="-3" y="-2.2" width="6" height="4.4" rx="2" transform="translate(9.2 5) rotate(-45)"/><rect x="-3" y="-2.2" width="6" height="4.4" rx="2" transform="translate(5 9.2) rotate(-45)"/></g></svg>
<div class="abs" style="left:1699px;top:276px;width:132px;height:24px;background:#272c30;border:1px solid #43484d;border-radius:2px"></div>
<span class="t" style="top:282.59px;font-size:11px;color:#e4e4e4;letter-spacing:-0.093px;left:1706.00px;">0.5</span>
<span class="t" style="top:283.10px;font-size:10.4px;color:#8c8f92;letter-spacing:-0.135px;right:95.13px;font-family:'DejaVu Sans','Liberation Sans',sans-serif;">mm</span>
<span class="t" style="top:307.93px;font-size:10.6px;color:#d9d9d9;letter-spacing:-0.147px;left:1446.00px;font-family:'DejaVu Sans','Liberation Sans',sans-serif;">Ширина линии первого слоя</span>
<div class="abs" style="left:1699px;top:301px;width:132px;height:24px;background:#272c30;border:1px solid #43484d;border-radius:2px"></div>
<span class="t" style="top:307.59px;font-size:11px;color:#e4e4e4;letter-spacing:-0.100px;left:1706.00px;">100.0</span>
<span class="t" style="top:308.10px;font-size:10.4px;color:#8c8f92;right:95.00px;font-family:'DejaVu Sans','Liberation Sans',sans-serif;">%</span>
<span class="t" style="top:359.07px;font-size:10.2px;color:#d9d9d9;letter-spacing:-0.119px;left:1446.00px;font-style:italic;font-family:'DejaVu Sans','Liberation Sans',sans-serif;">Толщина стенки</span>
<svg class="abs" style="left:1675px;top:356px" width="14" height="14" viewBox="0 0 14 14"><circle cx="7" cy="7" r="6.3" fill="#8b8b8b"/><text x="2.6" y="10.6" font-family="Liberation Serif,serif" font-style="italic" font-size="11" font-weight="bold" fill="#272c30">f</text><text x="7" y="11.4" font-family="Liberation Sans,sans-serif" font-style="italic" font-weight="bold" font-size="6" fill="#272c30">x</text></svg>
<div class="abs" style="left:1699px;top:351px;width:132px;height:24px;background:#1f2326;border:1px solid #cfd1d3;border-radius:2px"></div>
<span class="t" style="top:357.59px;font-size:11px;color:#777b7e;letter-spacing:-0.097px;left:1706.00px;">0.35</span>
<span class="t" style="top:358.10px;font-size:10.4px;color:#8c8f92;letter-spacing:-0.135px;right:95.13px;font-family:'DejaVu Sans','Liberation Sans',sans-serif;">mm</span>
<span class="t" style="top:384.07px;font-size:10.2px;color:#d9d9d9;letter-spacing:-0.112px;left:1463.00px;font-style:italic;font-family:'DejaVu Sans','Liberation Sans',sans-serif;">Количество линий стенки</span>
<svg class="abs" style="left:1675px;top:381px" width="14" height="14" viewBox="0 0 14 14"><circle cx="7" cy="7" r="6.3" fill="#8b8b8b"/><text x="2.6" y="10.6" font-family="Liberation Serif,serif" font-style="italic" font-size="11" font-weight="bold" fill="#272c30">f</text><text x="7" y="11.4" font-family="Liberation Sans,sans-serif" font-style="italic" font-weight="bold" font-size="6" fill="#272c30">x</text></svg>
<div class="abs" style="left:1699px;top:376px;width:132px;height:24px;background:#40342c;border:1.5px solid #f0a030;border-radius:2px"></div>
<span class="t" style="top:382.59px;font-size:11px;color:#e8e8e8;left:1706.00px;">0</span>
<span class="t" style="top:407.93px;font-size:10.6px;color:#d9d9d9;letter-spacing:-0.256px;left:1446.00px;font-family:'DejaVu Sans','Liberation Sans',sans-serif;">Расстояние очистки внешней стенки</span>
<div class="abs" style="left:1699px;top:401px;width:132px;height:24px;background:#272c30;border:1px solid #43484d;border-radius:2px"></div>
<span class="t" style="top:407.59px;font-size:11px;color:#e4e4e4;letter-spacing:-0.093px;left:1706.00px;">0.0</span>
<span class="t" style="top:408.10px;font-size:10.4px;color:#8c8f92;letter-spacing:-0.135px;right:95.13px;font-family:'DejaVu Sans','Liberation Sans',sans-serif;">mm</span>
<span class="t" style="top:432.93px;font-size:10.6px;color:#d9d9d9;letter-spacing:-0.035px;left:1446.00px;font-family:'DejaVu Sans','Liberation Sans',sans-serif;">Слои верхней оболочки</span>
<div class="abs" style="left:1699px;top:426px;width:132px;height:24px;background:#272c30;border:1px solid #43484d;border-radius:2px"></div>
<span class="t" style="top:432.59px;font-size:11px;color:#e4e4e4;left:1706.00px;">0</span>
<span class="t" style="top:459.07px;font-size:10.2px;color:#d9d9d9;letter-spacing:-0.312px;left:1446.00px;font-style:italic;font-family:'DejaVu Sans','Liberation Sans',sans-serif;">Толщина дна/крышки</span>
<svg class="abs" style="left:1675px;top:456px" width="14" height="14" viewBox="0 0 14 14"><circle cx="7" cy="7" r="6.3" fill="#8b8b8b"/><text x="2.6" y="10.6" font-family="Liberation Serif,serif" font-style="italic" font-size="11" font-weight="bold" fill="#272c30">f</text><text x="7" y="11.4" font-family="Liberation Sans,sans-serif" font-style="italic" font-weight="bold" font-size="6" fill="#272c30">x</text></svg>
<div class="abs" style="left:1699px;top:451px;width:132px;height:24px;background:#272c30;border:1px solid #43484d;border-radius:2px"></div>
<span class="t" style="top:457.59px;font-size:11px;color:#e4e4e4;left:1706.00px;">2</span>
<span class="t" style="top:458.10px;font-size:10.4px;color:#8c8f92;letter-spacing:-0.135px;right:95.13px;font-family:'DejaVu Sans','Liberation Sans',sans-serif;">mm</span>
<span class="t" style="top:482.93px;font-size:10.6px;color:#d9d9d9;letter-spacing:-0.135px;left:1463.00px;font-family:'DejaVu Sans','Liberation Sans',sans-serif;">Толщина крышки</span>
<div class="abs" style="left:1699px;top:476px;width:132px;height:24px;background:#1f2326;border:1px solid #cfd1d3;border-radius:2px"></div>
<span class="t" style="top:482.59px;font-size:11px;color:#777b7e;left:1706.00px;">2</span>
<span class="t" style="top:483.10px;font-size:10.4px;color:#8c8f92;letter-spacing:-0.135px;right:95.13px;font-family:'DejaVu Sans','Liberation Sans',sans-serif;">mm</span>
<span class="t" style="top:509.07px;font-size:10.2px;color:#d9d9d9;letter-spacing:-0.506px;left:1480.00px;font-style:italic;font-family:'DejaVu Sans','Liberation Sans',sans-serif;">Слои крышки</span>
<svg class="abs" style="left:1675px;top:506px" width="14" height="14" viewBox="0 0 14 14"><circle cx="7" cy="7" r="6.3" fill="#8b8b8b"/><text x="2.6" y="10.6" font-family="Liberation Serif,serif" font-style="italic" font-size="11" font-weight="bold" fill="#272c30">f</text><text x="7" y="11.4" font-family="Liberation Sans,sans-serif" font-style="italic" font-weight="bold" font-size="6" fill="#272c30">x</text></svg>
<div class="abs" style="left:1699px;top:501px;width:132px;height:24px;background:#272c30;border:1px solid #43484d;border-radius:2px"></div>
<span class="t" style="top:507.59px;font-size:11px;color:#e4e4e4;letter-spacing:-0.111px;left:1706.00px;">10</span>
<span class="t" style="top:532.93px;font-size:10.6px;color:#d9d9d9;letter-spacing:-0.378px;left:1463.00px;font-family:'DejaVu Sans','Liberation Sans',sans-serif;">Толщина дна</span>
<div class="abs" style="left:1699px;top:526px;width:132px;height:24px;background:#272c30;border:1px solid #43484d;border-radius:2px"></div>
<span class="t" style="top:532.59px;font-size:11px;color:#e4e4e4;left:1706.00px;">2</span>
<span class="t" style="top:533.10px;font-size:10.4px;color:#8c8f92;letter-spacing:-0.135px;right:95.13px;font-family:'DejaVu Sans','Liberation Sans',sans-serif;">mm</span>
<span class="t" style="top:557.93px;font-size:10.6px;color:#d9d9d9;letter-spacing:-0.397px;left:1480.00px;font-family:'DejaVu Sans','Liberation Sans',sans-serif;">Слои дна</span>
<div class="abs" style="left:1699px;top:551px;width:132px;height:24px;background:#272c30;border:1px solid #43484d;border-radius:2px"></div>
<span class="t" style="top:557.59px;font-size:11px;color:#e4e4e4;letter-spacing:-0.111px;left:1706.00px;">999999</span>
<span class="t" style="top:582.93px;font-size:10.6px;color:#d9d9d9;letter-spacing:-0.219px;left:1446.00px;font-family:'DejaVu Sans','Liberation Sans',sans-serif;">Шаблон для крышки/дна</span>
<div class="abs" style="left:1699px;top:576px;width:132px;height:24px;background:#272c30;border:1px solid #43484d;border-radius:2px"></div>
<span class="t" style="top:582.93px;font-size:10.6px;color:#e4e4e4;letter-spacing:-0.191px;left:1706.00px;font-family:'DejaVu Sans','Liberation Sans',sans-serif;">Линии</span>
<svg class="abs" style="left:1806px;top:583px" width="14" height="10" viewBox="0 0 14 10"><path d="M1.5 2L7 7.5L12.5 2" stroke="#dcdcdc" stroke-width="1.7" fill="none"/></svg>
<span class="t" style="top:607.93px;font-size:10.6px;color:#d9d9d9;letter-spacing:-0.113px;left:1446.00px;font-family:'DejaVu Sans','Liberation Sans',sans-serif;">Нижний шаблон начального слоя</span>
<div class="abs" style="left:1699px;top:601px;width:132px;height:24px;background:#272c30;border:1px solid #43484d;border-radius:2px"></div>
<span class="t" style="top:607.93px;font-size:10.6px;color:#e4e4e4;letter-spacing:-0.191px;left:1706.00px;font-family:'DejaVu Sans','Liberation Sans',sans-serif;">Линии</span>
<svg class="abs" style="left:1806px;top:608px" width="14" height="10" viewBox="0 0 14 10"><path d="M1.5 2L7 7.5L12.5 2" stroke="#dcdcdc" stroke-width="1.7" fill="none"/></svg>
<span class="t" style="top:632.93px;font-size:10.6px;color:#d9d9d9;letter-spacing:-0.158px;left:1446.00px;font-family:'DejaVu Sans','Liberation Sans',sans-serif;">Направление линии дна/крышки</span>
<div class="abs" style="left:1699px;top:626px;width:132px;height:24px;background:#272c30;border:1px solid #43484d;border-radius:2px"></div>
<span class="t" style="top:632.93px;font-size:10.6px;color:#e4e4e4;letter-spacing:-0.546px;left:1706.00px;font-family:'DejaVu Sans','Liberation Sans',sans-serif;">[ ]</span>
<span class="t" style="top:659.07px;font-size:10.2px;color:#d9d9d9;letter-spacing:0.007px;left:1446.00px;font-style:italic;font-family:'DejaVu Sans','Liberation Sans',sans-serif;">Вставка внешней стенки</span>
<svg class="abs" style="left:1675px;top:656px" width="14" height="14" viewBox="0 0 14 14"><circle cx="7" cy="7" r="6.3" fill="#8b8b8b"/><text x="2.6" y="10.6" font-family="Liberation Serif,serif" font-style="italic" font-size="11" font-weight="bold" fill="#272c30">f</text><text x="7" y="11.4" font-family="Liberation Sans,sans-serif" font-style="italic" font-weight="bold" font-size="6" fill="#272c30">x</text></svg>
<div class="abs" style="left:1699px;top:651px;width:132px;height:24px;background:#272c30;border:1px solid #43484d;border-radius:2px"></div>
<span class="t" style="top:657.59px;font-size:11px;color:#e4e4e4;left:1706.00px;">0</span>
<span class="t" style="top:658.10px;font-size:10.4px;color:#8c8f92;letter-spacing:-0.135px;right:95.13px;font-family:'DejaVu Sans','Liberation Sans',sans-serif;">mm</span>
<span class="t" style="top:684.07px;font-size:10.2px;color:#d9d9d9;letter-spacing:-0.026px;left:1446.00px;font-style:italic;font-family:'DejaVu Sans','Liberation Sans',sans-serif;">Оптимизация порядка печати стенок</span>
<div class="abs" style="left:1699px;top:676px;width:24px;height:24px;background:#272c30;border:1px solid #43484d;border-radius:2px"></div>
<span class="t" style="top:707.93px;font-size:10.6px;color:#d9d9d9;letter-spacing:-0.226px;left:1446.00px;font-family:'DejaVu Sans','Liberation Sans',sans-serif;">Печать внешних стенок</span>
<div class="abs" style="left:1699px;top:701px;width:24px;height:24px;background:#272c30;border:1px solid #43484d;border-radius:2px"></div>
<span class="t" style="top:734.07px;font-size:10.2px;color:#d9d9d9;letter-spacing:-0.215px;left:1446.00px;font-style:italic;font-family:'DejaVu Sans','Liberation Sans',sans-serif;">Чередующаяся стенка</span>
<div class="abs" style="left:1699px;top:726px;width:24px;height:24px;background:#272c30;border:1px solid #43484d;border-radius:2px"></div>
<div class="abs" style="left:1437px;top:326px;width:394px;height:24px;background:#4b5053"></div>
<svg class="abs" style="left:1447.2px;top:329.3px" width="17.6" height="15.9" viewBox="0 0 20 18"><path d="M5 1H15L13.5 6L18 17H2L6.5 6Z" fill="none" stroke="#d8d8d8" stroke-width="1.1"/><path d="M8 1L7 6L5.5 17M12 1L13 6L14.5 17" fill="none" stroke="#d8d8d8" stroke-width="1.1"/></svg>
<span class="t" style="top:333.09px;font-size:11.6px;color:#f4f4f4;letter-spacing:-0.184px;left:1480.50px;font-weight:bold;font-family:'DejaVu Sans','Liberation Sans',sans-serif;">Ограждение</span>
<svg class="abs" style="left:1806px;top:333px" width="14" height="10" viewBox="0 0 14 10"><path d="M1.5 2L7 7.5L12.5 2" stroke="#a4a6a8" stroke-width="1.5" fill="none"/></svg>
</div></div>
<div class="abs" style="left:1413px;top:747px;width:454px;height:1px;background:#3a3f44"></div>
<div class="abs" style="left:1425px;top:760px;width:135px;height:31px;background:#f2f2f2;border-radius:2px;box-shadow:0 1px 0 #cfcfcf"></div>
<svg class="abs" style="left:1437px;top:769px" width="10" height="14" viewBox="0 0 10 14"><path d="M7.5 1.5L2.5 7L7.5 12.5" stroke="#2a68d8" stroke-width="1.8" fill="none"/></svg>
<span class="t" style="top:769.88px;font-size:12.2px;color:#2a5fd0;letter-spacing:-0.035px;left:1455.00px;font-family:'DejaVu Sans','Liberation Sans',sans-serif;">Рекомендован</span>
<div class="abs" style="left:1412px;top:802px;width:456px;height:6.5px;background:#616161;border-radius:0 0 3px 3px"></div>
<div class="abs" style="left:1631px;top:803.3px;width:3px;height:3px;background:#d8d8d8;border-radius:50%"></div>
<div class="abs" style="left:1638px;top:803.3px;width:3px;height:3px;background:#d8d8d8;border-radius:50%"></div>
<div class="abs" style="left:1645px;top:803.3px;width:3px;height:3px;background:#d8d8d8;border-radius:50%"></div>
<div class="abs" style="left:1587px;top:891px;width:312px;height:120px;background:#272c30;border:1px solid #3a3f44;border-radius:3px"></div>
<svg class="abs" style="left:1607px;top:907px" width="21" height="21" viewBox="0 0 21 21"><circle cx="10.3" cy="10.4" r="8.8" stroke="#dcdcdc" stroke-width="1.5" fill="none"/><path d="M10.3 4.5V10.6L13.6 13.8" stroke="#dcdcdc" stroke-width="1.4" fill="none"/></svg>
<span class="t" style="top:913.26px;font-size:11.4px;color:#f2f2f2;letter-spacing:-0.341px;left:1633.60px;font-weight:bold;font-family:'DejaVu Sans','Liberation Sans',sans-serif;">3 дня 7 часа 19 минут</span>
<svg class="abs" style="left:1858px;top:907px" width="21" height="21" viewBox="0 0 21 21"><circle cx="10.4" cy="10.5" r="9.6" fill="#dedede"/><text x="7.2" y="16" font-family="Liberation Serif,serif" font-style="italic" font-weight="bold" font-size="15.5" fill="#272c30">i</text></svg>
<svg class="abs" style="left:1609px;top:936px" width="17" height="18" viewBox="0 0 17 18"><path d="M1.2 1V15.5M4.2 2.5V14M6.8 2.5V16M9.4 2.5V14M12 2.5V14" stroke="#cfcfcf" stroke-width="1.3"/><path d="M15 1V15.5" stroke="#cfcfcf" stroke-width="1.8"/></svg>
<span class="t" style="top:941.40px;font-size:10.4px;color:#dcdcdc;letter-spacing:-0.483px;left:1633.50px;font-family:'DejaVu Sans','Liberation Sans',sans-serif;">218g · 82.37m</span>
<div class="abs" style="left:1608px;top:964px;width:270px;height:32px;background:#2470ea;border-radius:2px;box-shadow:0 1px 0 #1a52b0"></div>
<span class="t" style="top:973.91px;font-size:12.4px;color:#ffffff;letter-spacing:-0.477px;left:1686.40px;font-family:'DejaVu Sans','Liberation Sans',sans-serif;">Сохранить в файл</span>
<div class="abs" style="left:0px;top:1028.5px;width:1920px;height:7px;background:#08203f;border-top:2px solid #1e8ae6"></div>
<div class="abs" style="left:2px;top:1032px;width:58px;height:4px;background:#0a2546;border:1px solid #1e8ae6;border-bottom:none"></div>
<div class="abs" style="left:104.4px;top:1032px;width:152.99999999999997px;height:4px;background:#0a2546;border:1px solid #1e8ae6;border-bottom:none"></div>
<div class="abs" style="left:259.65px;top:1032px;width:153.0px;height:4px;background:#0a2546;border:1px solid #1e8ae6;border-bottom:none"></div>
<div class="abs" style="left:414.9px;top:1032px;width:153.0px;height:4px;background:#0a2546;border:1px solid #1e8ae6;border-bottom:none"></div>
<div class="abs" style="left:570.15px;top:1032px;width:153.0px;height:4px;background:#0a2546;border:1px solid #1e8ae6;border-bottom:none"></div>
<div class="abs" style="left:725.4px;top:1032px;width:153.0px;height:4px;background:#0a2546;border:1px solid #1e8ae6;border-bottom:none"></div>
<div class="abs" style="left:880.65px;top:1032px;width:153.0000000000001px;height:4px;background:#0a2546;border:1px solid #1e8ae6;border-bottom:none"></div>
<div class="abs" style="left:1035.9px;top:1032px;width:153.0px;height:4px;background:#0a2546;border:1px solid #1e8ae6;border-bottom:none"></div>
<div class="abs" style="left:1191.15px;top:1032px;width:153.0px;height:4px;background:#0a2546;border:1px solid #1e8ae6;border-bottom:none"></div>
<div class="abs" style="left:1346.4px;top:1032px;width:153.0px;height:4px;background:#0a2546;border:1px solid #1e8ae6;border-bottom:none"></div>
<div class="abs" style="left:1501.65px;top:1032px;width:153.0px;height:4px;background:#0a2546;border:1px solid #1e8ae6;border-bottom:none"></div>
<div class="abs" style="left:1689px;top:1032px;width:232px;height:4px;background:#0a2546;border:1px solid #1e8ae6;border-bottom:none"></div>
</body>
</html>
